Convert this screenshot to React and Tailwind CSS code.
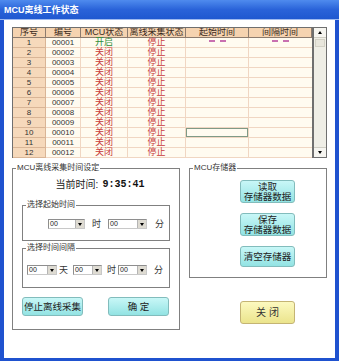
import React from 'react';

const FONT = "font-['Liberation_Sans','Noto_Sans_CJK_SC',sans-serif]";

const COLS = ['w-[33px]', 'w-[35px]', 'w-[47px]', 'w-[58px]', 'w-[63px]', 'w-[63px]'];
const HEADERS = ['序号', '编号', 'MCU状态', '离线采集状态', '起始时间', '间隔时间'];

const rows = Array.from({ length: 12 }, (_, i) => ({
  no: i + 1,
  id: String(i + 1).padStart(5, '0'),
  on: i === 0,
}));

function TriUp() {
  return <div className="w-0 h-0 border-l-[2.5px] border-r-[2.5px] border-b-[3px] border-l-transparent border-r-transparent border-b-black" />;
}

function TriDown() {
  return <div className="w-0 h-0 border-l-[2.5px] border-r-[2.5px] border-t-[3px] border-l-transparent border-r-transparent border-t-black" />;
}

function Scrollbar() {
  return (
    <div className="w-[15px] flex flex-col bg-[#efeee6] border-l-2 border-r border-[#6f6f6f]">
      <div className="h-[10px] flex items-center justify-center bg-[#f6f5f0] border-b border-[#cfcdc3]">
        <TriUp />
      </div>
      <div className="h-[8px] mx-[1px] mt-[1px] border border-[#d3d1c6] bg-[#e8e6dc]" />
      <div className="flex-1" />
      <div className="h-[10px] flex items-center justify-center bg-[#f6f5f0] border-t border-[#cfcdc3]">
        <TriDown />
      </div>
    </div>
  );
}

function Dash() {
  return <div className="w-[17px] border-t-2 border-dashed border-[#c86fb0] mb-[3px]" />;
}

function DataTable() {
  return (
    <div className="flex h-[131px] border-t border-b border-l border-[#6f6f6f]">
      <div className="flex flex-col bg-[#fffbf0]">
        <div className="flex h-[10px] bg-[#f5d3b0]">
          {HEADERS.map((h, i) => (
            <div key={h} className={`${COLS[i]} h-[10px] flex items-center justify-center border-r border-b border-[#8c7b6e] text-[9px] leading-[9px] text-[#3a2a20] overflow-hidden`}>
              {h}
            </div>
          ))}
        </div>
        {rows.map(r => (
          <div key={r.no} className="flex h-[10px]">
            <div className={`${COLS[0]} flex items-center justify-center bg-[#f6d9bb] border-r border-b border-[#d9b596] text-[8px] leading-[9px] text-[#333]`}>
              {r.no}
            </div>
            <div className={`${COLS[1]} flex items-center justify-center border-r border-b border-[#f0d6c2] text-[8px] leading-[9px] text-[#333]`}>
              {r.id}
            </div>
            <div className={`${COLS[2]} flex items-center justify-center border-r border-b border-[#f0d6c2] text-[9px] leading-[9px] ${r.on ? 'text-[#2f8f3a]' : 'text-[#c83a3a]'}`}>
              {r.on ? '开启' : '关闭'}
            </div>
            <div className={`${COLS[3]} flex items-center justify-center border-r border-b border-[#f0d6c2] text-[9px] leading-[9px] text-[#c83a3a]`}>
              停止
            </div>
            <div className={`${COLS[4]} flex items-center justify-center border-r border-b border-[#f0d6c2]`}>
              {r.no === 1 && <Dash />}
              {r.no === 10 && <div className="w-full h-full border border-[#7f9a86]" />}
            </div>
            <div className={`${COLS[5]} flex items-center justify-center border-b border-[#f0d6c2]`}>
              {r.no === 1 && <Dash />}
            </div>
          </div>
        ))}
      </div>
      <Scrollbar />
    </div>
  );
}

function Combo({ className }) {
  return (
    <div className={`${className} flex h-[10px] border border-[#8e8e8e] border-r-[#c8c8c8] border-b-[#c8c8c8] bg-white`}>
      <span className="flex-1 text-[7px] leading-[8px] pl-[1px] text-[#222]">00</span>
      <div className="w-[9px] flex items-center justify-center bg-[#dedbd2] border-l border-[#b5b5b5]">
        <TriDown />
      </div>
    </div>
  );
}

function GroupLabel({ children }) {
  return (
    <span className="-mt-[6px] ml-[3px] w-fit bg-white px-[1px] text-[8px] leading-[10px] text-[#333]">
      {children}
    </span>
  );
}

export default function App() {
  return (
    <div className={`w-[339px] h-[361px] flex flex-col bg-[#1f52cf] ${FONT}`}>
      {/* Title bar */}
      <div className="h-[20px] flex items-center pl-[4px] bg-gradient-to-b from-[#4f8bee] via-[#2a63d9] to-[#1f58d0] border-b border-[#9fbaf0]">
        <span className="text-[9px] font-bold text-white leading-[10px]">MCU离线工作状态</span>
      </div>

      <div className="flex-1 mx-[4px] mb-[3px] bg-white flex flex-col px-[8px] pt-[7px]">
        <DataTable />

        <div className="flex mt-[10px]">
          {/* Left group */}
          <div className="w-[168px] h-[162px] flex flex-col border border-[#808080]">
            <GroupLabel>MCU离线采集时间设定</GroupLabel>

            <div className="mt-[6px] flex items-center justify-center pl-[8px] h-[12px]">
              <span className="text-[10px] leading-[12px] text-[#222]">当前时间:</span>
              <span className="ml-[4px] font-['Liberation_Mono',monospace] font-bold text-[10px] leading-[12px] text-[#111]">9:35:41</span>
            </div>

            <div className="mt-[14px] mx-[9px] h-[36px] flex flex-col border border-[#808080]">
              <GroupLabel>选择起始时间</GroupLabel>
              <div className="mt-[9px] flex items-center pl-[25px] text-[9px] leading-[10px] text-[#333]">
                <Combo className="w-[37px]" />
                <span className="ml-[7px]">时</span>
                <Combo className="ml-[7px] w-[39px]" />
                <span className="ml-[8px]">分</span>
              </div>
            </div>

            <div className="mt-[7px] mx-[9px] h-[40px] flex flex-col border border-[#808080]">
              <GroupLabel>选择时间间隔</GroupLabel>
              <div className="mt-[12px] flex items-center pl-[4px] text-[9px] leading-[10px] text-[#333]">
                <Combo className="w-[30px]" />
                <span className="ml-[2px]">天</span>
                <Combo className="ml-[5px] w-[29px]" />
                <span className="ml-[5px]">时</span>
                <Combo className="ml-[2px] w-[29px]" />
                <span className="ml-[7px]">分</span>
              </div>
            </div>

            <div className="mt-[9px] ml-[9px] flex gap-[25px]">
              <button type="button" className="w-[61px] h-[19px] rounded-[3px] border border-[#82bcbc] bg-gradient-to-b from-[#c8f7f7] to-[#92e3e3] text-[9.5px] leading-[11px] text-[#222]">
                停止离线采集
              </button>
              <button type="button" className="w-[61px] h-[19px] rounded-[3px] border border-[#82bcbc] bg-gradient-to-b from-[#c8f7f7] to-[#92e3e3] text-[9.5px] leading-[11px] text-[#222]">
                确 定
              </button>
            </div>
          </div>

          {/* Right column */}
          <div className="ml-[9px] w-[138px] flex flex-col">
            <div className="h-[110px] flex flex-col border border-[#808080]">
              <GroupLabel>MCU存储器</GroupLabel>
              <div className="pl-[50px] flex flex-col">
                <button type="button" className="mt-[7px] w-[55px] h-[23px] rounded-[3px] border border-[#82bcbc] bg-gradient-to-b from-[#c8f7f7] to-[#92e3e3] text-[9.5px] leading-[10px] text-[#222]">
                  读取<br />存储器数据
                </button>
                <button type="button" className="mt-[10px] w-[55px] h-[23px] rounded-[3px] border border-[#82bcbc] bg-gradient-to-b from-[#c8f7f7] to-[#92e3e3] text-[9.5px] leading-[10px] text-[#222]">
                  保存<br />存储器数据
                </button>
                <button type="button" className="mt-[10px] w-[55px] h-[21px] rounded-[3px] border border-[#82bcbc] bg-gradient-to-b from-[#c8f7f7] to-[#92e3e3] text-[9.5px] leading-[10px] text-[#222]">
                  清空存储器
                </button>
              </div>
            </div>

            <button type="button" className="mt-[23px] ml-[51px] w-[55px] h-[23px] rounded-[3px] border border-[#c4b474] bg-gradient-to-b from-[#fcf9bf] to-[#ebe48c] text-[10px] leading-[11px] text-[#333]">
              关 闭
            </button>
          </div>
        </div>
      </div>
    </div>
  );
}
